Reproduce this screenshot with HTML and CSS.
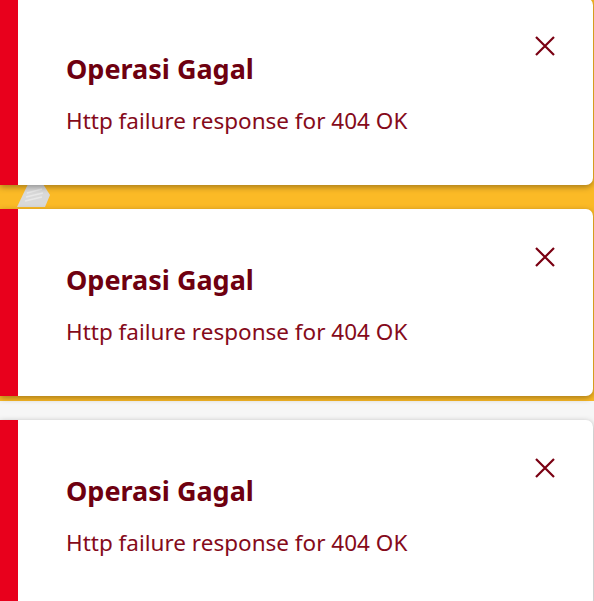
FILE: index.html
```html
<!DOCTYPE html>
<html>
<head>
<meta charset="utf-8">
<link rel="stylesheet" href="styles.css">
</head>
<body>
<div class="page">
  <div class="header">
    <svg class="logo" width="40" height="24" viewBox="0 0 40 24">
      <polygon points="11,0 26,0 33,11 28,23 0,23" fill="#d9d9d9"/>
      <path d="M10 9 L25 5 M9 13 L26 9 M8 17 L25 13" stroke="#e8e8e8" stroke-width="1.5"/>
    </svg>
  </div>
  <div class="content"></div>
</div>
<div class="toasts">
  <div class="toast">
    <div class="toast-body">
      <div class="toast-title">Operasi Gagal</div>
      <div class="toast-msg">Http failure response for 404 OK</div>
    </div>
    <button class="close" aria-label="close">
      <svg width="20" height="20" viewBox="0 0 20 20"><path d="M1 1 L19 19 M19 1 L1 19" stroke="#7a0012" stroke-width="2.2"/></svg>
    </button>
  </div>
  <div class="toast">
    <div class="toast-body">
      <div class="toast-title">Operasi Gagal</div>
      <div class="toast-msg">Http failure response for 404 OK</div>
    </div>
    <button class="close" aria-label="close">
      <svg width="20" height="20" viewBox="0 0 20 20"><path d="M1 1 L19 19 M19 1 L1 19" stroke="#7a0012" stroke-width="2.2"/></svg>
    </button>
  </div>
  <div class="toast">
    <div class="toast-body">
      <div class="toast-title">Operasi Gagal</div>
      <div class="toast-msg">Http failure response for 404 OK</div>
    </div>
    <button class="close" aria-label="close">
      <svg width="20" height="20" viewBox="0 0 20 20"><path d="M1 1 L19 19 M19 1 L1 19" stroke="#7a0012" stroke-width="2.2"/></svg>
    </button>
  </div>
</div>
</body>
</html>
```
FILE: styles.css
```css
html, body {
  margin: 0;
  padding: 0;
  overflow: hidden;
}
body {
  width: 594px;
  height: 601px;
  font-family: "Noto Sans", "Open Sans", sans-serif;
  background: #f6f6f6;
}
.page {
  display: flex;
  flex-direction: column;
}
.header {
  height: 401px;
  background: #fbba26;
  display: flex;
  align-items: flex-end;
  padding-left: 17px;
}
.logo {
  display: block;
  margin-bottom: 193px;
}
.content {
  height: 200px;
  background: #f6f6f6;
}
.toasts {
  position: absolute;
  top: -2px;
  left: 0;
  width: 593px;
  display: flex;
  flex-direction: column;
  gap: 24px;
}
.toast {
  height: 187px;
  background: #fff;
  border-left: 18px solid #e8001c;
  border-radius: 0 7px 7px 0;
  box-shadow: 0 2px 6px rgba(0, 0, 0, 0.35);
  display: flex;
  align-items: flex-start;
  box-sizing: border-box;
}
.toast-body {
  flex: 1;
  padding: 53px 0 0 48px;
}
.toast-title {
  font-size: 27px;
  font-weight: 700;
  color: #6e0010;
  line-height: 36px;
}
.toast-msg {
  margin-top: 19px;
  font-size: 22.5px;
  color: #850a1a;
  line-height: 30px;
}
.close {
  background: none;
  border: 0;
  padding: 0;
  margin: 38px 38px 0 0;
  width: 20px;
  height: 20px;
  cursor: pointer;
}
.close svg {
  display: block;
}
```
